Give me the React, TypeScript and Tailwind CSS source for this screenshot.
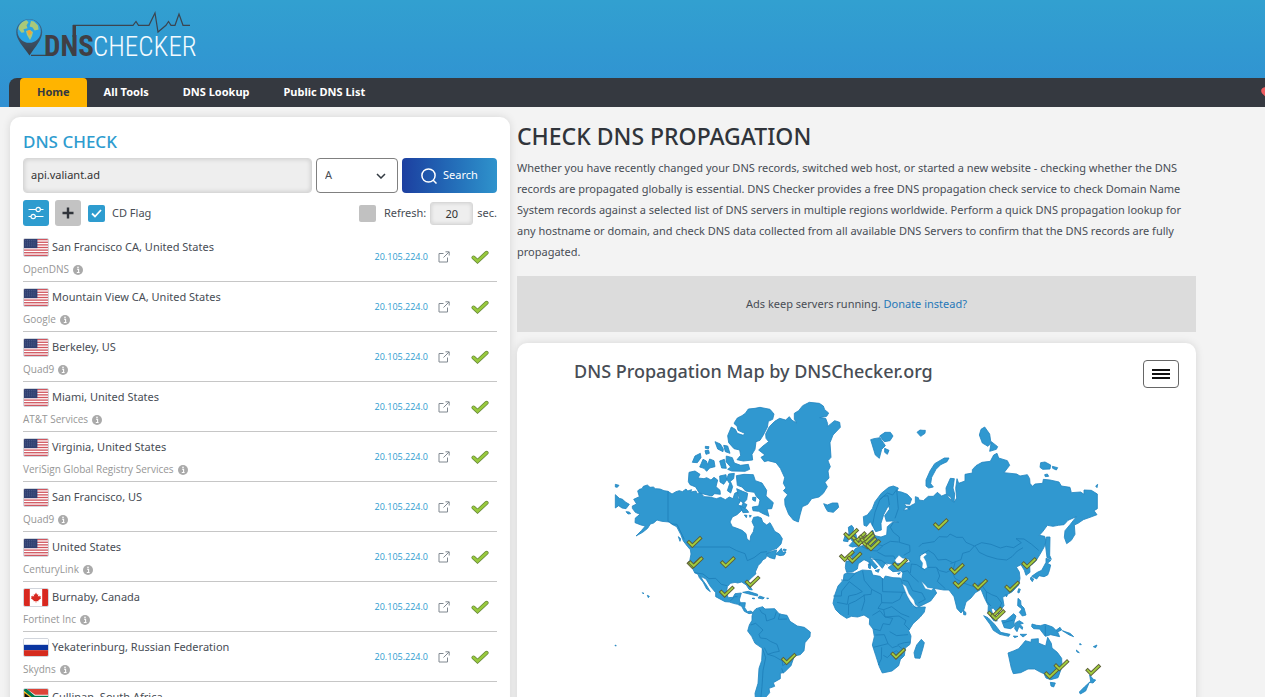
import React from "react";

type FlagCode = "us" | "ca" | "ru" | "za";

const servers: { flag: FlagCode; place: string; provider: string }[] = [
  { flag: "us", place: "San Francisco CA, United States", provider: "OpenDNS" },
  { flag: "us", place: "Mountain View CA, United States", provider: "Google" },
  { flag: "us", place: "Berkeley, US", provider: "Quad9" },
  { flag: "us", place: "Miami, United States", provider: "AT&T Services" },
  { flag: "us", place: "Virginia, United States", provider: "VeriSign Global Registry Services" },
  { flag: "us", place: "San Francisco, US", provider: "Quad9" },
  { flag: "us", place: "United States", provider: "CenturyLink" },
  { flag: "ca", place: "Burnaby, Canada", provider: "Fortinet Inc" },
  { flag: "ru", place: "Yekaterinburg, Russian Federation", provider: "Skydns" },
  { flag: "za", place: "Cullinan, South Africa", provider: "Liquid Telecommunications Ltd" },
];

function Flag({ code }: { code: FlagCode }) {
  return (
    <svg viewBox="0 0 26 19" className="h-[19px] w-[26px] shrink-0 rounded-[2px] border border-gray-300" preserveAspectRatio="none" aria-hidden="true">
      {code === "us" && (
        <>
          <rect width="26" height="19" fill="#fff" />
          {[0, 1, 2, 3, 4, 5, 6].map((i) => (
            <rect key={i} y={i * 2.92} width="26" height="1.46" fill="#d0555f" />
          ))}
          <rect width="14.5" height="10.2" fill="#2f3f70" />
          {[1.6, 3.6, 5.6, 7.6].map((y) => (
            <path key={y} d={`M1.5 ${y}H13.5`} stroke="#6c7aa3" strokeWidth=".7" strokeDasharray=".8 1.2" />
          ))}
        </>
      )}
      {code === "ca" && (
        <>
          <rect width="26" height="19" fill="#fff" />
          <path d="M0 0h6.3v19H0zM19.7 0H26v19h-6.300z" fill="#d8281f" />
          <path d="M13 4l1.200 2.300 1.300-.6-.5 3 1.500-1.400.4 1 1.600-.3-.7 1.700.8.6-3.200 2.500.3 1-2.300-.3V15h-.8v-1.500l-2.300.3.300-1-3.200-2.500.8-.6-.7-1.700 1.600.3.4-1L11 8.700l-.5-3 1.300.6z" fill="#d8281f" />
        </>
      )}
      {code === "ru" && (
        <>
          <rect width="26" height="6.500" fill="#fff" />
          <rect y="6.500" width="26" height="6" fill="#0a35a0" />
          <rect y="12.500" width="26" height="6.500" fill="#d52b1e" />
        </>
      )}
      {code === "za" && (
        <>
          <rect width="26" height="19" fill="#fff" />
          <path d="M3 0H26V6.300H12z" fill="#dd4438" />
          <path d="M3 19H26V12.700H12z" fill="#123a94" />
          <path d="M0 0L11 9.500H26M0 19L11 9.500" stroke="#007a4d" strokeWidth="4" fill="none" />
          <path d="M0 3L8 9.500L0 16z" fill="#111" stroke="#ffb81c" strokeWidth="1.200" />
        </>
      )}
    </svg>
  );
}

function Tick() {
  return (
    <svg viewBox="0 0 18 14" className="h-[14px] w-[18px]" role="img" aria-label="Resolved">
      <path d="M2.500 7.500L6.500 11.200L15.600 2.800" fill="none" stroke="#66843a" strokeWidth="4" strokeLinecap="round" />
      <path d="M2.500 7.500L6.500 11.200L15.600 2.800" fill="none" stroke="#97c93d" strokeWidth="2.600" strokeLinecap="round" />
    </svg>
  );
}

function InfoIcon() {
  return (
    <svg viewBox="0 0 10 10" className="h-[10px] w-[10px]" aria-hidden="true">
      <circle cx="5" cy="5" r="5" fill="#aaa" />
      <path d="M4 4.200h1.600v3.100M3.800 7.500h2.800" stroke="#fff" strokeWidth="1.100" fill="none" />
      <circle cx="5" cy="2.400" r=".8" fill="#fff" />
    </svg>
  );
}

function Logo() {
  return (
    <svg viewBox="0 0 210 66" className="h-[66px] w-[210px]" role="img" aria-label="DNS Checker">
      <defs>
        <linearGradient id="pin" x1="0" y1="0" x2="0" y2="1">
          <stop offset="0" stopColor="#3a6f98" />
          <stop offset="1" stopColor="#3a3d45" />
        </linearGradient>
      </defs>
      <path d="M29.200 19C22 19 16.200 25 16.200 32c0 8 7.300 14.500 13.300 23.500C35 47 42.200 40 42.200 32c0-7-5.800-13-13-13z" fill="url(#pin)" />
      <circle cx="29.200" cy="31.200" r="11.600" fill="#2ba4e3" />
      <path d="M18.500 29c0-4 4-8 8-8.800l2 2-2 3 1 3-4 1 1 3-3 .5zM31 21l3 .6 4 4 .6 4-4 1-2-3-3-1zM26 31l4-1 3 2-1 4-2 4-3-5z" fill="#a9c979" />
      <path d="M27 31l3-1 2 3-3 3z" fill="#f0a33a" />
      <path d="M31 55.400H46M73 25.300H133L136 21.500L138.500 25.300H149L155 13L158 32L166 25.300L168.500 21.500L171 25.300H175L179 14L183 25.300H190" fill="none" stroke="#3b4550" strokeWidth="1.200" />
      <path d="M72.500 25h3.500v12h-3.500z" fill="#403f44" />
      <text x="44" y="56" fontSize="29" fontWeight="700" fill="#403f44" fontFamily="'Roboto Condensed','Liberation Sans Narrow','DejaVu Sans Condensed',sans-serif">DNS</text>
      <text x="93" y="56" fontSize="27" fontWeight="300" fill="#f4fbff" fontFamily="'Roboto Condensed','Liberation Sans Narrow','DejaVu Sans Condensed',sans-serif">CHECKER</text>
    </svg>
  );
}

/* Map units are one third of a pixel. */
const americas = [
  "M46,314 58,325 68,328 76,336 88,343 78,356 66,354 56,347 46,354Z",
  "M46,283 57,286 52,292 46,291Z",
  "M78,365 88,366 92,371 84,372Z",
  "M113,303 118,298 126,296 130,289 142,285 150,292 160,291 166,296 180,297 192,302 204,304 216,312 228,305 238,302 247,305 258,297 263,303 275,299 272,306 288,303 292,311 302,308 312,320 330,321 349,326 362,322 376,329 388,321 399,326 404,310 412,306 414,325 422,332 414,345 424,349 430,338 441,344 435,356 424,362 411,374 397,381 390,396 397,410 411,415 426,421 438,431 441,447 450,454 452,438 460,425 463,410 456,395 461,382 474,380 484,384 488,396 500,405 510,398 517,410 524,424 538,432 547,446 543,462 531,475 515,481 498,493 515,484 530,480 527,492 536,484 544,475 548,487 558,486 552,495 540,497 528,493 524,507 510,503 500,497 497,505 488,510 483,518 475,526 466,546 468,551 454,564 443,575 453,594 457,600 447,598 439,585 425,576 413,579 405,577 391,580 382,590 379,610 385,623 399,622 405,611 424,609 418,630 421,638 436,638 434,653 442,665 453,663 460,669 447,671 433,664 425,649 413,643 400,640 388,636 375,635 347,620 347,608 331,589 318,567 302,559 308,570 319,585 331,605 320,597 309,576 298,563 294,553 284,548 274,528 269,513 273,492 271,479 263,470 250,453 242,433 230,410 216,403 208,396 185,394 171,390 161,399 151,402 143,415 128,427 108,438 124,422 136,408 123,405 105,398 106,384 120,373 106,367 97,355 97,348 110,342 101,328 118,320Z",
  "M235,440 242,446 240,454Z",
  "M403,98 412,84 426,77 436,70 445,57 465,55 480,52 510,58 522,72 518,88 505,94 502,112 490,135 480,151 468,155 465,178 456,193 458,210 430,213 411,209 422,196 419,180 402,176 386,158 383,137 394,111 406,118 412,130 430,136 434,130 414,121 411,108 403,102Z",
  "M345,155 361,162 370,177 369,185 353,177Z M371,166 383,168 390,190 376,185Z",
  "M316,169 327,170 325,177 316,175Z M315,182 326,181 328,190 318,193Z",
  "M301,190 303,203 292,218 277,217 285,198Z",
  "M309,208 319,213 323,224 329,207 342,212 345,230 329,234 320,244 312,235 299,231 304,220Z",
  "M359,213 373,208 379,235 365,234Z M379,198 397,203 403,219 422,226 445,223 449,238 435,244 395,243 383,238 392,231 378,215Z",
  "M267,247 285,243 300,253 294,264 312,266 320,263 333,270 342,262 353,270 348,290 360,301 361,313 344,311 336,318 318,314 297,308 287,291 270,284 265,275Z",
  "M359,258 378,254 380,270 371,283 360,276Z M386,252 403,250 401,266 391,274 398,290 392,309 382,302 389,281 380,267Z",
  "M409,257 432,253 460,254 466,272 486,279 500,301 498,318 520,338 515,356 501,357 507,379 489,371 476,364 459,362 457,351 476,348 480,330 469,319 463,307 437,303 426,291 412,286Z",
  "M410,296 428,304 443,310 440,329 430,340 419,330Z M420,347 441,359 446,367 429,368Z M458,322 468,322 466,334 458,330Z",
  "M433,375 441,376 439,383Z M448,376 454,377 450,382Z",
  "M476,180 489,168 506,155 498,145 497,132 508,110 524,94 539,85 557,90 568,80 575,90 590,99 583,88 583,70 596,62 608,47 628,37 658,40 670,48 674,59 686,69 680,79 659,83 677,85 683,101 682,110 704,92 719,97 721,112 699,135 690,158 693,202 684,212 691,230 684,243 687,264 675,277 682,290 670,310 657,321 635,326 623,343 607,350 600,375 595,396 580,390 566,373 555,345 554,327 563,314 550,302 558,294 550,280 554,263 541,235 528,218 504,212 493,215 483,202 495,195Z",
  "M671,341 682,345 697,339 713,339 716,352 700,367 683,364 677,354Z",
  "M460,665 468,656 488,650 495,657 524,656 538,672 561,676 570,694 592,708 613,712 631,726 630,740 615,758 612,782 601,794 583,798 573,827 553,847 541,850 541,866 520,878 524,889 507,895 509,908 497,922 502,936 488,955 495,973 507,988 493,993 476,977 468,950 465,910 474,880 477,835 485,812 487,775 465,760 455,739 443,723 448,705 456,691 456,678Z",
  "M428,607 445,604 473,613 473,618 455,614Z M474,624 479,618 493,623 489,627Z M456,625 463,624 463,627Z M500,624 506,625 503,627Z",
  "M127,608 132,610 129,611Z M142,616 148,619 145,623Z M45,765 49,767 46,768Z M551,477 559,479 556,484 550,481Z",
];

const oldWorld = [
  "M130,350 142,345 157,326 165,305 184,280 206,262 220,258 235,264 231,274 244,276 262,283 275,297 269,313 253,311 258,319 270,319 269,329 258,321 251,331 263,329 272,317 286,310 286,290 295,293 297,300 310,302 325,289 340,289 352,277 365,288 379,282 386,292 397,305 392,292 379,281 378,264 391,235 403,236 399,264 404,282 402,307 410,294 407,265 411,236 416,250 435,243 435,223 457,219 457,209 468,197 486,187 511,184 521,165 531,160 536,174 562,182 569,196 552,218 590,222 600,228 622,224 629,236 630,250 637,259 645,252 668,250 670,238 690,240 717,246 724,258 750,262 754,278 782,276 792,283 792,270 814,271 832,282 832,326 822,332 831,344 810,352 790,359 774,370 763,375 765,403 754,421 740,431 733,412 735,392 750,374 769,350 744,361 732,374 715,376 699,379 682,376 668,395 658,406 674,409 678,425 672,442 660,463 648,482 639,491 629,498 630,517 618,526 613,511 603,494 589,501 598,516 600,535 596,555 577,575 556,587 548,592 552,617 539,634 534,642 521,625 513,625 520,649 532,663 521,662 504,637 505,617 494,595 483,568 466,578 453,594 438,606 432,628 423,639 411,626 402,590 387,570 371,570 342,565 350,579 332,603 296,621 285,611 269,585 248,555 244,542 249,518 242,513 219,515 204,503 218,493 218,486 239,487 225,480 235,468 250,476 267,478 272,484 261,490 234,490 218,493 197,489 187,505 175,491 160,475 150,471 158,483 173,500 165,507 145,485 132,479 115,491 112,507 97,516 80,517 76,503 78,484 98,481 93,463 107,445 127,437 147,425 149,408 158,390 164,407 183,411 200,405 202,380 217,367 236,367 215,363 199,364 194,347 209,327 205,317 191,344 183,370 184,390 167,395 151,365 140,379 132,376Z",
  "M318,258 318,240 330,213 344,191 373,174 387,174 381,185 362,194 348,208 335,232 332,251 340,261 326,264Z",
  "M152,119 162,116 180,113 196,137 185,148 178,175 166,165Z M179,108 195,97 211,97 219,108 210,122 193,125Z M194,145 207,151 202,163 194,157Z M291,97 300,90 309,91 316,91 315,100 302,109Z",
  "M494,81 509,102 513,130 504,139 487,129 478,105 483,88Z M514,125 533,140 529,148 509,154Z",
  "M662,188 675,186 692,195 690,207 668,208 660,202Z M697,199 713,203 709,210 698,205Z M674,224 682,222 686,229 676,230Z M827,258 833,253 831,263Z",
  "M85,382 95,376 101,384 99,395 108,403 111,421 119,429 119,438 97,441 87,437 98,425 88,411Z M76,403 86,402 84,425 70,423 74,411Z",
  "M690,411 689,466 694,478 681,473 676,432 679,411Z",
  "M678,475 693,481 682,490 692,495 688,512 683,525 672,530 657,527 650,537 635,529 652,517 665,511 678,487Z M633,531 641,537 637,545 631,537Z",
  "M596,566 601,568 597,579 593,577Z M430,630 438,638 437,645 431,644Z M557,584 562,585 559,591Z",
  "M81,519 104,520 127,510 154,512 158,525 180,529 190,538 196,528 219,533 242,534 247,552 257,579 271,606 285,622 316,621 313,636 300,652 279,671 266,692 273,708 270,733 256,744 253,767 241,779 236,797 216,813 187,819 178,800 167,766 157,735 163,710 159,687 148,673 149,656 132,645 113,651 94,649 80,655 60,642 47,629 39,610 44,586 54,558 70,540 72,523Z",
  "M304,718 313,728 309,744 300,775 285,774 282,758 290,735Z",
  "M491,647 504,653 523,672 537,690 542,697 570,703 566,709 539,703 520,691 510,673Z",
  "M545,662 558,661 581,641 588,648 582,666 584,678 572,686 553,683Z M587,668 598,662 610,670 599,673 608,681 607,688 597,680 591,695 584,686Z M594,595 602,602 603,615 612,624 618,645 607,648 598,637 606,627 593,617Z M580,708 594,709 584,713Z M600,703 620,703 609,711Z",
  "M636,672 650,676 661,677 675,673 698,681 713,696 719,710 692,704 676,709 659,687 641,686 635,680Z M708,691 720,682 725,690 714,695Z M727,692 750,700 761,710 748,705Z",
  "M566,768 564,759 580,753 596,746 608,732 616,722 633,727 634,718 655,716 655,729 677,738 683,712 694,730 696,744 712,757 725,775 726,800 714,833 692,839 678,834 672,821 662,817 644,807 624,807 602,818 580,821 574,805Z",
  "M691,847 706,849 701,861 693,858Z M809,825 820,838 827,840 819,849 808,847 797,873 781,882 778,876 793,861 812,844Z",
  "M820,740 831,735 827,743Z M769,750 778,758 771,756Z M780,730 784,734 779,734Z",
  "M147,483 153,492 149,497Z M145,492 152,495 151,506 146,504Z M165,512 178,508 175,517Z M233,520 241,518 236,524Z",
];

const seas = [
  "M224,480 237,466 247,474 265,478 270,486 253,490 230,490Z",
  "M301,465 315,458 321,463 311,471 318,484 322,502 313,508 306,503 308,489 300,478Z",
  "M304,544 316,555 323,563 340,565 334,571 316,566Z",
  "M247,551 258,559 267,581 282,601 288,622 279,617 262,588Z",
];

const americaBorders =
  "M204,304V394L217,402 231,403 253,448M271,471H389L410,482 435,491 442,512 462,503 483,487 501,485M283,548 309,552 327,566 347,565 364,583 381,587M391,633 404,620 413,620M421,638 417,645M479,658 485,668 496,674 500,693 523,685 529,665M540,670 535,688 561,687M452,705 467,700 478,710 489,720 477,733 481,744 499,746 511,754 531,763 538,784 522,787 503,793 493,773M487,775 497,803 489,842 486,889 480,950M503,793 523,799 547,813 548,827 558,821M545,835 550,850";
const oldBorders =
  "M157,378 165,337 179,300 202,279 218,285 230,269 235,326 225,355M178,300 190,289 204,287 208,315M220,367 211,382 220,397 238,411 238,427 269,436 270,455 251,466M164,407 166,432 187,437 211,424 236,426M125,439 149,451 171,453 189,437M172,456 195,468 221,468 226,478M156,477 184,481 203,495M297,440 306,431 343,425 357,410 382,411 390,402 410,412 428,412 438,427 463,438 485,428 513,433 541,444 559,439 581,443 604,428 588,416 612,417 635,433 656,451M463,438 449,454 428,460 423,479 391,491M299,468 325,451 342,462 354,480 378,478 398,488M466,439 478,457 501,468 532,477 560,480 576,470 592,453 609,443M323,502 347,502 359,512 379,517 400,507 406,484M350,502 359,528 352,544 376,566M394,510 405,535 426,547 447,555 467,562 480,548 499,575 515,584 531,590 545,609 537,625M499,575 500,604 513,618M247,516 263,512 274,526 296,546M271,519 274,492 290,494 315,510M248,541 264,544 278,572 306,579 316,598 295,609M63,540 85,541 106,520M40,588H64L65,573 88,545 127,575 109,583 86,588 82,613 51,607M128,513 133,541 155,568 153,583 134,585 107,603 86,612 85,645M187,534 188,575 255,577M155,568 184,583 185,608 174,625 191,629 215,620 243,641 268,651M132,584 134,602 125,632M185,608 217,609 239,598 248,578M157,646 180,632 195,651 218,655 209,674 189,671 181,692 161,687M191,629 195,651 237,648 258,662 253,673 269,689M166,705 193,704 204,731 160,742M209,695 230,707 250,705 264,704M204,731 217,743 235,737 254,752M185,742 184,777 175,795M233,734 253,728 272,726M190,766 202,773 215,760 229,752 247,768M676,677V707M550,668 580,660M269,604 289,625";

const marks: [number, number][] = [
  [283, 456], [283, 519], [287, 517], [383, 517], [380, 605], [457, 575], [566, 807],
  [753, 432], [776, 442], [782, 452], [798, 440], [802, 448], [808, 459], [819, 466], [1022, 403],
  [740, 498], [763, 503], [900, 522], [1070, 537], [1081, 578], [1140, 584], [1236, 590], [1287, 520],
  [1184, 668], [1193, 676], [894, 791], [1355, 850], [1384, 826], [1479, 840],
];

function toPath(points: string) {
  return points.replace(/M([\d,. ]+)/g, (_, p: string) => {
    const all = p.trim().split(/\s+/);
    return `M${all[0]}L${all.slice(1).join(" ")}`;
  });
}

function WorldMap() {
  return (
    <svg viewBox="0 0 1530 1020" className="ml-[83px] block w-[510px] max-w-[calc(100%-83px)]" role="img" aria-label="World map of DNS servers">
      <g fill="#3098d0" stroke="#2386c1" strokeWidth="2.500" strokeLinejoin="round">
        {americas.map((d) => <path key={d} d={toPath(d)} />)}
        <g transform="translate(660 30)">
          {oldWorld.map((d) => <path key={d} d={toPath(d)} />)}
          {seas.map((d) => <path key={d} d={toPath(d)} fill="#fff" strokeWidth="1" />)}
          <path d={oldBorders} fill="none" stroke="#1d7eb9" />
        </g>
        <path d={americaBorders} fill="none" stroke="#1d7eb9" />
      </g>
      {marks.map(([x, y]) => (
        <g key={`${x}-${y}`} transform={`translate(${x} ${y})`} fill="none" strokeLinecap="square">
          <path d="M-16 1L-6 11L17-11" stroke="#5c5e37" strokeWidth="11" />
          <path d="M-16 1L-6 11L17-11" stroke="#a2cd3e" strokeWidth="5.500" />
        </g>
      ))}
    </svg>
  );
}

export default function App() {
  return (
    <div className="min-h-screen overflow-x-hidden bg-[#f3f3f3] font-['Noto_Sans','Open_Sans',sans-serif] text-[11px] text-[#484d55]">
      <header className="bg-linear-to-b from-[#32a0d0] to-[#3090d2] pl-[9px]">
        <div className="-ml-[9px] flex h-[78px] items-start">
          <a href="#home"><Logo /></a>
        </div>
        <nav className="flex h-[29px] items-stretch overflow-hidden rounded-tl-[8px] bg-[#353940] pl-[11px] font-bold text-white">
          <a href="#home" className="flex items-center rounded-t-[4px] bg-[#ffb400] px-[17px] text-[#353940]">Home</a>
          <a href="#tools" className="flex items-center px-[17px]">All Tools</a>
          <a href="#lookup" className="flex items-center px-[17px]">DNS Lookup</a>
          <a href="#list" className="flex items-center px-[17px]">Public DNS List</a>
          <a href="#donate" aria-label="Donate" className="-mr-[10px] ml-auto flex shrink-0 items-center">
            <svg viewBox="0 0 14 12" className="h-3 w-[14px]"><path d="M7 12L1.200 6.500C-.8 4.200.2.500 3.500.2 5.200 0 6.300 1 7 2 7.700 1 8.800 0 10.500.2c3.300.3 4.300 4 2.300 6.300z" fill="#ee5c60" /></svg>
          </a>
        </nav>
      </header>

      <main className="flex items-start gap-[7px] pt-[10px] pl-[10px]">
        <section className="w-[500px] shrink-0 rounded-[10px] bg-white px-[13px] pt-3 pb-4 shadow-[0_0_8px_rgba(0,0,0,0.12)]">
          <h2 className="text-[17px] leading-[26px] font-medium text-[#2e9ccf]">DNS CHECK</h2>
          <form className="mt-[3px]" onSubmit={(e) => e.preventDefault()}>
            <div className="flex h-[35px] gap-1">
              <input aria-label="Domain name" defaultValue="api.valiant.ad" className="min-w-0 flex-1 rounded-[4px] border border-[#d8d8d8] bg-[#eee] px-[7px] text-[#333] shadow-[inset_0_0_5px_rgba(0,0,0,0.16)]" />
              <div className="relative w-[82px]">
                <select aria-label="Record type" defaultValue="A" className="h-full w-full appearance-none rounded-[4px] border border-[#808080] bg-white px-2">
                  <option>A</option><option>AAAA</option><option>CNAME</option><option>MX</option>
                </select>
                <svg viewBox="0 0 10 6" className="pointer-events-none absolute top-[15px] right-3 h-[6px] w-[10px]"><path d="M1 1l4 4 4-4" fill="none" stroke="#333a42" strokeWidth="1.500" /></svg>
              </div>
              <button type="submit" className="flex w-[95px] items-center justify-center gap-[6px] rounded-[4px] bg-linear-to-r from-[#1d3fa0] to-[#2f93cc] text-white">
                <svg viewBox="0 0 16 16" className="h-4 w-4" fill="none" stroke="#fff" strokeWidth="1.500"><circle cx="7.500" cy="7.500" r="6.600" /><path d="M12 12l3.500 3.500" /></svg>
                Search
              </button>
            </div>
            <div className="mt-[7px] flex h-[26px] items-center">
              <button type="button" aria-label="Filter" className="flex h-[26px] w-[26px] items-center justify-center rounded-[3px] bg-[#2e9ccf]">
                <svg viewBox="0 0 16 14" className="h-[14px] w-4" fill="none" stroke="#fff" strokeWidth="1.200"><path d="M.5 3.500H8M12.500 3.500H15.500M.5 10.500H3M7.500 10.500H15.500" /><circle cx="10.200" cy="3.500" r="2.200" /><circle cx="5.200" cy="10.500" r="2.200" /></svg>
              </button>
              <button type="button" aria-label="Add" className="ml-[6px] flex h-[26px] w-[26px] items-center justify-center rounded-[3px] bg-[#c3c3c3]">
                <svg viewBox="0 0 12 12" className="h-3 w-3"><path d="M6 .5v11M.5 6h11" stroke="#30343a" strokeWidth="2.400" /></svg>
              </button>
              <label className="ml-[7px] flex items-center gap-[7px]">
                <span className="relative h-[17px] w-[17px]">
                  <input type="checkbox" defaultChecked className="peer block h-[17px] w-[17px] appearance-none rounded-[2px] bg-[#c1c1c1] checked:bg-[#2e9ccf]" />
                  <svg viewBox="0 0 11 9" className="pointer-events-none absolute top-1 left-[3px] hidden h-[9px] w-[11px] peer-checked:block"><path d="M1 4.500L4 7.500L10 1" fill="none" stroke="#fff" strokeWidth="1.800" /></svg>
                </span>
                CD Flag
              </label>
              <label className="ml-auto flex items-center gap-2">
                <input type="checkbox" className="h-[17px] w-[17px] appearance-none rounded-[2px] bg-[#c1c1c1] checked:bg-[#2e9ccf]" />
                Refresh:
              </label>
              <input aria-label="Refresh seconds" defaultValue="20" className="mx-1 h-[23px] w-[43px] rounded-[3px] border border-[#d8d8d8] bg-[#eee] text-center text-[#333] shadow-[inset_0_0_4px_rgba(0,0,0,0.14)]" />
              <span>sec.</span>
            </div>
          </form>
          <ul className="mt-[6px]">
            {servers.map((s) => (
              <li key={s.place} className="flex h-[50px] items-center border-b border-[#c6c6c6]">
                <div className="min-w-0 flex-1 pt-1">
                  <div className="flex h-[22px] items-center gap-[3px]"><Flag code={s.flag} /><span className="pb-[2px] leading-[18px]">{s.place}</span></div>
                  <div className="flex h-[22px] items-center gap-1 font-['Open_Sans',sans-serif] text-[10px] text-[#969696]">{s.provider}<InfoIcon /></div>
                </div>
                <a href="#record" className="font-['Open_Sans',sans-serif] text-[9px] text-[#2e9ccf]">20.105.224.0</a>
                <a href="#details" aria-label="Open details" className="ml-[10px]">
                  <svg viewBox="0 0 12 12" className="h-3 w-3" fill="none" stroke="#808890" strokeWidth="1"><path d="M5.500 2.500H1V11H9.500V6.500M7.500.8H11.200V4.500M11 1L5.500 6.500" /></svg>
                </a>
                <span className="mr-2 ml-[21px]"><Tick /></span>
              </li>
            ))}
          </ul>
        </section>

        <section className="min-w-0 flex-1 pr-[69px]">
          <h1 className="mt-1 text-[23px] leading-[30px] font-medium text-[#30343a]">CHECK DNS PROPAGATION</h1>
          <p className="mt-[6px] leading-[21px]">
            Whether you have recently changed your DNS records, switched web host, or started a new website - checking whether the DNS records are propagated globally is essential. DNS Checker provides a free DNS propagation check service to check Domain Name System records against a selected list of DNS servers in multiple regions worldwide. Perform a quick DNS propagation lookup for any hostname or domain, and check DNS data collected from all available DNS Servers to confirm that the DNS records are fully propagated.
          </p>
          <div className="mt-[14px] flex h-14 items-center justify-center bg-[#dcdcdc]">
            <p>Ads keep servers running. <a href="#donate" className="text-[#2678b8]">Donate instead?</a></p>
          </div>
          <div className="mt-[11px] rounded-[10px] bg-white pb-4 shadow-[0_0_8px_rgba(0,0,0,0.12)]">
            <div className="flex h-[47px] items-end justify-between pr-[17px] pl-[57px]">
              <h2 className="pb-[5px] text-lg leading-[28px] font-medium">DNS Propagation Map by DNSChecker.org</h2>
              <button type="button" aria-label="Chart menu" className="mb-[2px] flex h-7 w-9 items-center justify-center rounded-[4px] border border-[#666] bg-white">
                <svg viewBox="0 0 18 10" className="h-[10px] w-[18px]"><path d="M0 1h18M0 5h18M0 9h18" stroke="#111" strokeWidth="1.800" /></svg>
              </button>
            </div>
            <WorldMap />
          </div>
        </section>
      </main>
    </div>
  );
}
